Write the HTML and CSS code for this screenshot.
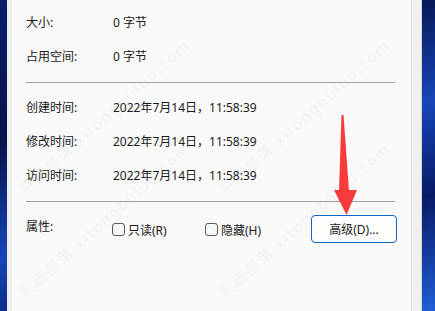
FILE: index.html
```html
<!DOCTYPE html>
<html lang="zh-CN">
<head>
  <meta charset="UTF-8" />
  <meta name="viewport" content="width=device-width, initial-scale=1" />
  <title>属性 - 常规</title>
  <link rel="stylesheet" href="styles.css">
</head>
<body>
  <div class="window">
    <div class="panel">
      <div class="row"><span class="label">大小:</span><span class="value">0 字节</span></div>
      <div class="row"><span class="label">占用空间:</span><span class="value">0 字节</span></div>

      <hr class="divider" />

      <div class="row"><span class="label">创建时间:</span><span class="value">2022年7月14日，11:58:39</span></div>
      <div class="row"><span class="label">修改时间:</span><span class="value">2022年7月14日，11:58:39</span></div>
      <div class="row"><span class="label">访问时间:</span><span class="value">2022年7月14日，11:58:39</span></div>

      <hr class="divider" />

      <div class="attrs">
        <span class="label attrs-label">属性:</span>
        <label class="check check-first"><span class="box"></span>只读(R)</label>
        <label class="check"><span class="box"></span>隐藏(H)</label>
        <button class="btn">高级(D)...</button>
      </div>
    </div>
  </div>

  <!-- watermark -->
  <div class="wm wm-1">系统部落 xitongbuluo.com</div>
  <div class="wm wm-2">系统部落 xitongbuluo.com</div>
  <div class="wm wm-3">系统部落 xitongbuluo.com</div>
  <div class="wm wm-4">系统部落 xitongbuluo.com</div>

  <!-- red pointer arrow -->
  <svg class="arrow" width="435" height="311" viewBox="0 0 435 311">
    <polygon points="341.5,115 343.5,115 349,191 339,191" fill="#f53b3b" />
    <polygon points="334,190 357,190 346.5,215" fill="#f53b3b" />
  </svg>
</body>
</html>
```

FILE: styles.css
```css
* {
  box-sizing: border-box;
}
html, body {
  height: 100%;
}
body {
  margin: 0;
  overflow: hidden;
  position: relative;
  font-family: "Noto Sans", "Noto Sans CJK SC", sans-serif;
  font-size: 12px;
  color: #1a1a1a;
  background: linear-gradient(160deg, #0b1f6e 0%, #06124a 30%, #1646b8 55%, #081a66 75%, #1f5fd6 100%);
}
.window {
  margin-left: 7px;
  width: 415px;
  height: 311px;
  padding: 0 9px 0 4px;
  background: #f0f0f0;
  border-right: 1px solid #d6d6d6;
}
.panel {
  height: 100%;
  background: #f9f9f9;
  border-left: 1px solid #ececec;
  border-right: 1px solid #e3e3e3;
  padding: 6px 16px 0 14px;
}
.row {
  display: flex;
  height: 34px;
  line-height: 34px;
}
.label {
  width: 87px;
  flex: none;
}
.divider {
  border: 0;
  border-top: 1px solid #a0a0a0;
  margin: 8px 0;
}
.attrs {
  display: flex;
  align-items: center;
  margin-top: 13px;
}
.attrs-label {
  align-self: flex-start;
  line-height: 24px;
}
.check {
  display: flex;
  align-items: center;
  gap: 3px;
  margin-top: 1px;
}
.check-first {
  width: 93px;
  margin-left: -1px;
}
.box {
  width: 13px;
  height: 13px;
  border: 1px solid #5c5c5c;
  border-radius: 3px;
  background: #f6f6f6;
}
.btn {
  margin-left: auto;
  margin-right: -2px;
  width: 86px;
  height: 28px;
  font: inherit;
  color: #1a1a1a;
  background: #fdfdfd;
  border: 1px solid #0a67c2;
  border-radius: 4px;
  padding: 0;
}
.wm {
  position: absolute;
  font-size: 15px;
  line-height: 18px;
  letter-spacing: 2px;
  color: rgba(0, 0, 0, 0.05);
  white-space: nowrap;
  transform: rotate(-42deg);
  transform-origin: 0 0;
  pointer-events: none;
}
.wm-1 { left: 15px; top: 185px; }
.wm-2 { left: 215px; top: 185px; }
.wm-3 { left: 15px; top: 288px; }
.wm-4 { left: 215px; top: 288px; }
.arrow {
  position: absolute;
  left: 0;
  top: 0;
  pointer-events: none;
}
```
